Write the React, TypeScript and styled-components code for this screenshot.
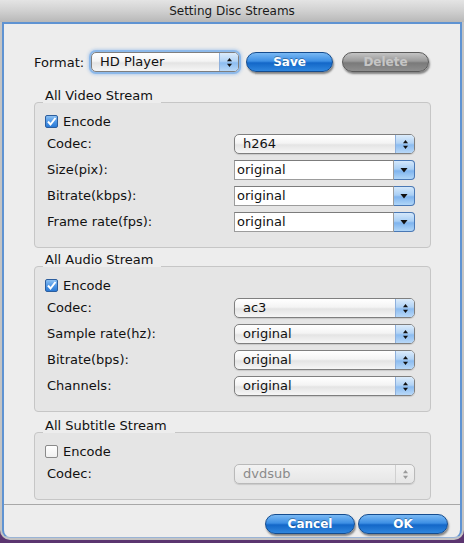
import { Fragment } from 'react';
import styled, { createGlobalStyle } from 'styled-components';

const GlobalStyle = createGlobalStyle`
  html, body {
    margin: 0;
    padding: 0;
    background: #5b3570;
  }
  body {
    font-family: 'DejaVu Sans', 'Liberation Sans', sans-serif;
    font-size: 13px;
    color: #111;
  }
`;

const Window = styled.div`
  width: 464px;
  height: 540px;
  box-sizing: border-box;
  display: flex;
  flex-direction: column;
  background: #c4c4c4;
  border-radius: 0 0 10px 10px;
  padding: 0 2px 2px;
  overflow: hidden;
`;

const TitleBar = styled.div`
  height: 22px;
  margin: 0 -2px;
  display: flex;
  align-items: center;
  justify-content: center;
  font-size: 12px;
  color: #1a1a1a;
  background: linear-gradient(to bottom, #e4e4e4 0%, #d0d0d0 50%, #b8b8b8 100%);
`;

const Content = styled.div`
  flex: 1;
  display: flex;
  flex-direction: column;
  background: #ededed;
  border: 2px solid #5f93d2;
  border-bottom: 1px solid #9ab4d6;
  border-radius: 0 0 8px 8px;
`;

const Body = styled.div`
  padding: 28px 29px 0 30px;
  display: flex;
  flex-direction: column;
`;

const FormatRow = styled.div`
  display: flex;
  align-items: center;
  height: 20px;
`;

const FormatLabel = styled.span`
  width: 57px;
`;

const PopUp = styled.div<{ $focused?: boolean; $disabled?: boolean }>`
  width: ${(p) => (p.$focused ? '148px' : '181px')};
  height: 20px;
  box-sizing: border-box;
  display: flex;
  border: 1px solid ${(p) => (p.$disabled ? '#b9b9b9' : '#7f7f7f')};
  border-radius: 5px;
  overflow: hidden;
  background: ${(p) =>
    p.$disabled
      ? 'linear-gradient(to bottom, #f2f2f2, #e6e6e6)'
      : 'linear-gradient(to bottom, #ffffff 0%, #f4f4f4 45%, #e4e4e4 55%, #f6f6f6 100%)'};
  box-shadow: ${(p) =>
    p.$focused
      ? '0 0 0 2px #8db9ea, 0 0 3px 3px rgba(120, 170, 230, 0.45)'
      : '0 1px 1px rgba(0,0,0,0.12)'};
  color: ${(p) => (p.$disabled ? '#8a8a8a' : '#111')};
`;

const PopUpValue = styled.span`
  flex: 1;
  padding-left: 8px;
  line-height: 18px;
`;

const Stepper = styled.span<{ $disabled?: boolean }>`
  width: 18px;
  display: flex;
  align-items: center;
  justify-content: center;
  border-left: 1px solid ${(p) => (p.$disabled ? '#d0d0d0' : '#8eb0dc')};
  background: ${(p) =>
    p.$disabled
      ? 'transparent'
      : 'linear-gradient(to bottom, #dcecfb 0%, #b2d3f5 45%, #8cbcf0 55%, #b8d8f8 100%)'};
`;

const Combo = styled.div`
  width: 181px;
  height: 20px;
  display: flex;
`;

const ComboField = styled.span`
  flex: 1;
  box-sizing: border-box;
  background: #fff;
  border: 1px solid #9c9c9c;
  border-top-color: #7c7c7c;
  padding-left: 2px;
  line-height: 18px;
`;

const ComboButton = styled.span`
  width: 21px;
  box-sizing: border-box;
  display: flex;
  align-items: center;
  justify-content: center;
  border: 1px solid #4a78b4;
  border-left: none;
  border-radius: 0 4px 4px 0;
  background: linear-gradient(to bottom, #d4e8fb 0%, #a9cff5 45%, #7fb4ee 55%, #b0d6f8 100%);
`;

const Pill = styled.button<{ $gray?: boolean; $width?: number; $gap?: number }>`
  width: ${(p) => p.$width ?? 87}px;
  height: 20px;
  margin-left: ${(p) => p.$gap ?? 0}px;
  padding: 0;
  border-radius: 10px;
  font-family: 'DejaVu Sans', 'Liberation Sans', sans-serif;
  font-size: 12px;
  font-weight: bold;
  border: 1px solid ${(p) => (p.$gray ? '#5a5a5a' : '#154c8e')};
  color: ${(p) => (p.$gray ? '#c6c6c6' : '#ffffff')};
  background: ${(p) =>
    p.$gray
      ? 'linear-gradient(to bottom, #c4c4c4 0%, #9a9a9a 45%, #7a7a7a 55%, #8e8e8e 100%)'
      : 'linear-gradient(to bottom, #7ab9f4 0%, #3d8fe4 45%, #1367c8 55%, #2f86de 100%)'};
  box-shadow: 1px 2px 2px rgba(0, 0, 0, 0.45);
  text-shadow: ${(p) => (p.$gray ? 'none' : '0 -1px 0 rgba(0,0,0,0.3)')};
`;

const GroupWrap = styled.div<{ $top: number }>`
  display: flex;
  flex-direction: column;
  margin-top: ${(p) => p.$top}px;
`;

const Legend = styled.div`
  align-self: flex-start;
  position: relative;
  z-index: 1;
  margin: 0 0 -1px 9px;
  padding: 0 8px 0 2px;
  height: 14px;
  line-height: 14px;
  background: #ededed;
`;

const GroupBox = styled.div`
  display: grid;
  grid-template-columns: 1fr 181px;
  row-gap: 6px;
  align-items: center;
  background: #e5e5e5;
  border: 1px solid #c6c6c6;
  border-radius: 4px;
  padding: 8px 15px 15px 10px;
`;

const CheckRow = styled.label`
  grid-column: 1 / -1;
  height: 20px;
  display: flex;
  align-items: center;
  gap: 5px;
  margin-bottom: -3px;
`;

const Box = styled.span<{ $checked?: boolean }>`
  width: 13px;
  height: 13px;
  box-sizing: border-box;
  display: flex;
  align-items: center;
  justify-content: center;
  border-radius: 2px;
  border: 1px solid ${(p) => (p.$checked ? '#2c5e9e' : '#8a8a8a')};
  background: ${(p) =>
    p.$checked
      ? 'linear-gradient(to bottom, #8cc0f2 0%, #4f97e6 50%, #2a7ad6 100%)'
      : 'linear-gradient(to bottom, #ffffff, #f0f0f0)'};
`;

const FieldLabel = styled.span`
  padding-left: 2px;
  line-height: 20px;
`;

const Footer = styled.div`
  margin-top: 4px;
  border-top: 1px solid #a8a8a8;
  display: flex;
  justify-content: flex-end;
  gap: 3px;
  padding: 9px 12px 0;
`;

const Arrows = ({ color = '#111' }: { color?: string }) => (
  <svg width="7" height="11" viewBox="0 0 7 11">
    <path d="M3.5 1 L6 4.2 L1 4.2 Z" fill={color} />
    <path d="M3.5 10 L6 6.8 L1 6.8 Z" fill={color} />
  </svg>
);

const DownArrow = () => (
  <svg width="8" height="6" viewBox="0 0 8 6">
    <path d="M0.5 1 L7.5 1 L4 5.5 Z" fill="#111" />
  </svg>
);

const Check = () => (
  <svg width="11" height="11" viewBox="0 0 11 11">
    <path d="M2 5.5 L4.5 8.5 L9.5 2" stroke="#fff" strokeWidth="2" fill="none" />
  </svg>
);

const Select = ({ value, disabled }: { value: string; disabled?: boolean }) => (
  <PopUp $disabled={disabled}>
    <PopUpValue>{value}</PopUpValue>
    <Stepper $disabled={disabled}>
      <Arrows color={disabled ? '#9a9a9a' : '#111'} />
    </Stepper>
  </PopUp>
);

const ComboBox = ({ value }: { value: string }) => (
  <Combo>
    <ComboField>{value}</ComboField>
    <ComboButton>
      <DownArrow />
    </ComboButton>
  </Combo>
);

type Row = { label: string; value: string; combo?: boolean };

const Group = ({
  title,
  checked,
  rows,
  top,
  disabled,
}: {
  title: string;
  checked: boolean;
  rows: Row[];
  top: number;
  disabled?: boolean;
}) => (
  <GroupWrap $top={top}>
    <Legend>{title}</Legend>
    <GroupBox>
      <CheckRow>
        <Box $checked={checked}>{checked && <Check />}</Box>
        Encode
      </CheckRow>
      {rows.map((r) => (
        <Fragment key={r.label}>
          <FieldLabel>{r.label}</FieldLabel>
          {r.combo ? (
            <ComboBox value={r.value} />
          ) : (
            <Select value={r.value} disabled={disabled} />
          )}
        </Fragment>
      ))}
    </GroupBox>
  </GroupWrap>
);

const App = () => {
  return (
    <>
      <GlobalStyle />
      <Window>
        <TitleBar>Setting Disc Streams</TitleBar>
        <Content>
          <Body>
            <FormatRow>
              <FormatLabel>Format:</FormatLabel>
              <PopUp $focused>
                <PopUpValue>HD Player</PopUpValue>
                <Stepper>
                  <Arrows />
                </Stepper>
              </PopUp>
              <Pill $gap={7}>Save</Pill>
              <Pill $gray $gap={9}>
                Delete
              </Pill>
            </FormatRow>
            <Group
              title="All Video Stream"
              checked
              top={17}
              rows={[
                { label: 'Codec:', value: 'h264' },
                { label: 'Size(pix):', value: 'original', combo: true },
                { label: 'Bitrate(kbps):', value: 'original', combo: true },
                { label: 'Frame rate(fps):', value: 'original', combo: true },
              ]}
            />
            <Group
              title="All Audio Stream"
              checked
              top={5}
              rows={[
                { label: 'Codec:', value: 'ac3' },
                { label: 'Sample rate(hz):', value: 'original' },
                { label: 'Bitrate(bps):', value: 'original' },
                { label: 'Channels:', value: 'original' },
              ]}
            />
            <Group
              title="All Subtitle Stream"
              checked={false}
              disabled
              top={7}
              rows={[{ label: 'Codec:', value: 'dvdsub' }]}
            />
          </Body>
          <Footer>
            <Pill $width={90}>Cancel</Pill>
            <Pill $width={90}>OK</Pill>
          </Footer>
        </Content>
      </Window>
    </>
  );
};

export default App;
